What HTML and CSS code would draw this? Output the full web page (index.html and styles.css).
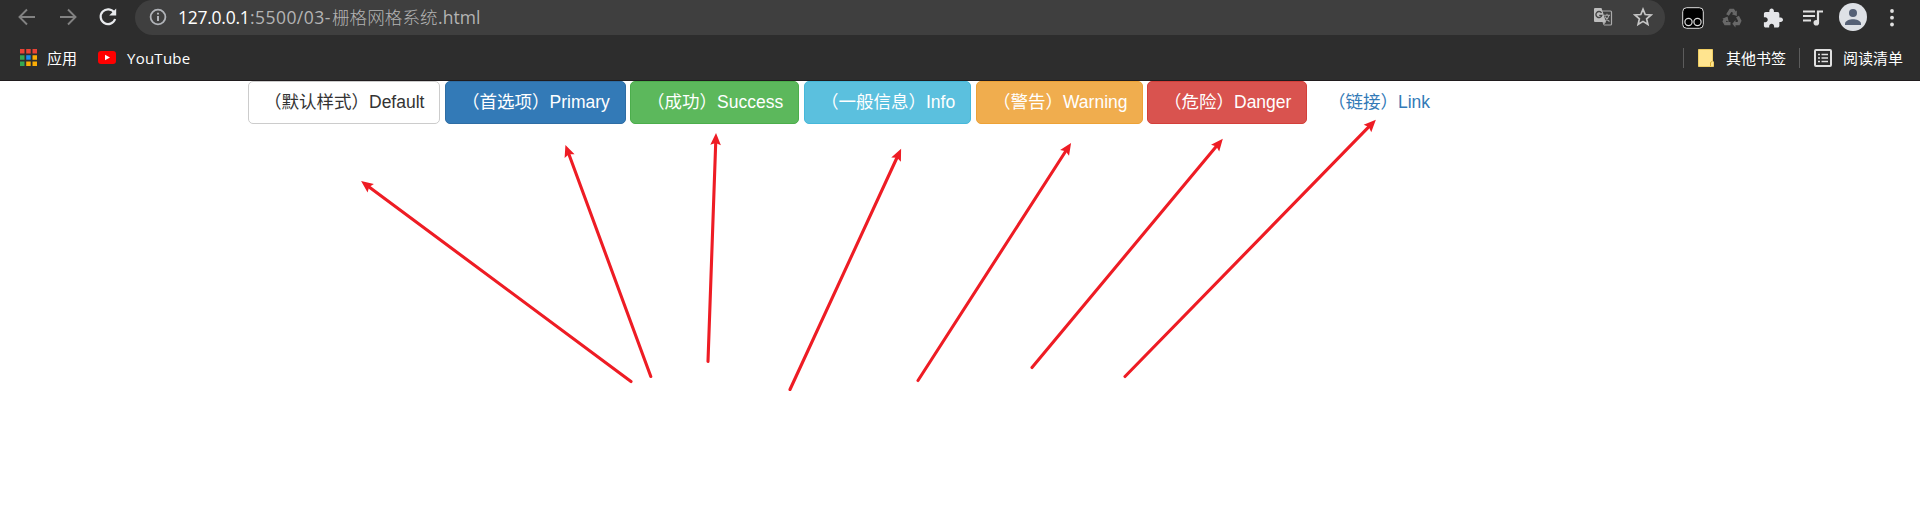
FILE: index.html
```html
<!DOCTYPE html>
<html lang="zh">
<head>
<meta charset="utf-8">
<title>栅格网格系统</title>
<link rel="stylesheet" href="styles.css">
</head>
<body>
<header class="chrome">
  <div class="toolbar">
    <svg class="nav back" width="18" height="18" viewBox="0 0 18 18"><path d="M17 9H2M9 1.5L1.5 9L9 16.500"/></svg>
    <svg class="nav forward" width="18" height="18" viewBox="0 0 18 18"><path d="M1 9H16M9 1.500L16.500 9L9 16.500"/></svg>
    <svg class="reload" width="20" height="20" viewBox="0 0 20 20"><path d="M16.300 5.700A7.400 7.400 0 1 0 17.100 12" fill="none" stroke="#e8eaed" stroke-width="2.200"/><path d="M18.200 1.500V8.500H11.200z" fill="#e8eaed"/></svg>
    <div class="address">
      <svg class="info" width="18" height="18" viewBox="0 0 18 18"><circle cx="9" cy="9" r="7.400" fill="none" stroke="#b0b3b8" stroke-width="1.800"/><path d="M9 8V13M9 4.700V6.600" stroke="#b0b3b8" stroke-width="2"/></svg>
      <div class="url"><span class="host">127.0.0.1</span><span class="port">:5500/03-</span><span class="cn">栅格网格系统</span><span class="ext">.html</span></div>
      <svg class="translate" width="20" height="20" viewBox="0 0 20 20"><path d="M8 4H17.500Q18.500 4 18.500 5V17Q18.500 18 17.500 18H11" fill="none" stroke="#aaa" stroke-width="1.200"/><path d="M2 1H8.500L13 15H2Q1 15 1 14V2Q1 1 2 1z" fill="#bdbdbd"/><path d="M8.500 6A3 3 0 1 0 8.800 8.400H6.200" fill="none" stroke="#444" stroke-width="1.400"/><path d="M11 8.300H17M14 6.800V8.300M16 8.300Q15 12 12 14M12 9.500Q13.500 12.500 16.500 14.500" fill="none" stroke="#aaa" stroke-width="1.100"/><path d="M9.500 15H13L10.500 18.300z" fill="#aaa"/></svg>
      <svg class="star" width="20" height="20" viewBox="0 0 20 20"><path d="M10 2.200L12.200 7.500L18 8L13.600 11.800L14.900 17.400L10 14.400L5.100 17.400L6.400 11.800L2 8L7.800 7.500z" fill="none" stroke="#c6c6c6" stroke-width="1.700"/></svg>
    </div>
    <svg class="monkey" width="22" height="22" viewBox="0 0 22 22"><rect x=".7" y=".7" width="20.600" height="20.600" rx="4" fill="#000" stroke="#ddd"/><circle cx="6.500" cy="15" r="3.600" fill="none" stroke="#ddd" stroke-width="1.200"/><circle cx="15.500" cy="15" r="3.600" fill="none" stroke="#ddd" stroke-width="1.200"/></svg>
    <svg class="recycle" width="20" height="20" viewBox="0 0 20 20"><g fill="none" stroke="#686868" stroke-width="3.200"><path d="M5.500 7L8.500 2.300H11L12.500 4.500"/><path d="M15.500 8.500L17.800 12.800L16.500 15.700H13"/><path d="M8.500 15.700H3.500L2.200 13.500L3.400 11"/></g><g fill="#686868"><path d="M14.800 2.500V8L9.800 6.200z"/><path d="M13.500 12V19.400L10.300 15.700z"/><path d="M.3 10.800L5.500 8.500L6.800 14z"/></g></svg>
    <svg class="puzzle" width="20" height="20" viewBox="1 0.500 22 22"><path fill="#e4e5e8" d="M20.500 11H19V7c0-1.100-.9-2-2-2h-4V3.500C13 2.120 11.880 1 10.500 1S8 2.120 8 3.500V5H4c-1.100 0-1.990.9-1.990 2v3.800H3.500c1.490 0 2.700 1.210 2.700 2.700s-1.210 2.700-2.700 2.700H2V20c0 1.100.9 2 2 2h3.800v-1.500c0-1.490 1.210-2.700 2.700-2.700s2.700 1.210 2.700 2.700V22H17c1.100 0 2-.9 2-2v-4h1.500c1.380 0 2.500-1.120 2.500-2.500S21.880 11 20.500 11z"/></svg>
    <svg class="queue" width="20" height="18" viewBox="0 0 20 18"><path d="M0 2.500H12M0 7H12M0 11.500H8" stroke="#e0e0e0" stroke-width="2"/><path d="M15 13.500V2.500H20" fill="none" stroke="#e0e0e0" stroke-width="2.200"/><circle cx="13.300" cy="13.800" r="2.800" fill="#e0e0e0"/></svg>
    <svg class="avatar" width="28" height="28" viewBox="0 0 28 28"><circle cx="14" cy="14" r="14" fill="#dee1e6"/><circle cx="14" cy="10" r="4" fill="#566176"/><path d="M6 22V20.500C6 17.700 11 16.200 14 16.200S22 17.700 22 20.500V22z" fill="#566176"/></svg>
    <svg class="dots" width="4" height="18" viewBox="0 0 4 18"><g fill="#e0e0e0"><circle cx="2" cy="2" r="1.900"/><circle cx="2" cy="8.700" r="1.900"/><circle cx="2" cy="15.500" r="1.900"/></g></svg>
  </div>
  <div class="bookmarks">
    <svg class="apps" width="17" height="17" viewBox="0 0 17 17"><g fill="#ea4335"><path d="M0 0h4.500v4.500H0zM6.200 0h4.500v4.500H6.200zM12.500 0H17v4.500h-4.500z"/></g><path fill="#34a853" d="M0 6.200h4.500v4.500H0zM0 12.500h4.500V17H0z"/><path fill="#1a8cf0" d="M6.200 6.200h4.500v4.500H6.200z"/><path fill="#fbad05" d="M12.500 6.200H17v4.500h-4.500zM6.200 12.500h4.500V17H6.200zM12.500 12.500H17V17h-4.500z"/></svg>
    <span class="label apps-label">应用</span>
    <svg class="youtube" width="18" height="13" viewBox="0 0 18 13"><rect width="18" height="13" rx="3" fill="#f00"/><path d="M7 3.700L12 6.500L7 9.300z" fill="#fff"/></svg>
    <span class="label yt-label">YouTube</span>
    <span class="divider"></span>
    <svg class="folder" width="16" height="18" viewBox="0 0 16 18"><path d="M.5 .5H14.500V12L15.500 13V17.500H.5z" fill="#ffe48f" stroke="#efcd62"/><path d="M12.500 17V13.500L14 12.500" fill="none" stroke="#d9ad2d"/></svg>
    <span class="label folder-label">其他书签</span>
    <span class="divider second"></span>
    <svg class="list" width="18" height="18" viewBox="0 0 18 18"><rect x="1" y="1" width="16" height="16" rx="1" fill="none" stroke="#e0e0e0" stroke-width="2"/><path d="M4 5.500h2M7.500 5.500H14M4 9h2M7.500 9H14M4 12.500h2M7.500 12.500H14" stroke="#e0e0e0" stroke-width="1.700"/></svg>
    <span class="label">阅读清单</span>
  </div>
</header>
<main class="page">
  <div class="buttons">
    <button class="btn btn-default">（默认样式）Default</button>
    <button class="btn btn-primary">（首选项）Primary</button>
    <button class="btn btn-success">（成功）Success</button>
    <button class="btn btn-info">（一般信息）Info</button>
    <button class="btn btn-warning">（警告）Warning</button>
    <button class="btn btn-danger">（危险）Danger</button>
    <button class="btn btn-link">（链接）Link</button>
  </div>
</main>
<svg class="arrows" width="1920" height="505" viewBox="0 0 1920 505">
  <defs><marker id="head" markerUnits="userSpaceOnUse" markerWidth="14" markerHeight="12" refX="12" refY="6" orient="auto"><path d="M12.500 6L0.500 0.700L2.500 6L0.500 11.300z" fill="#ee1c24"/></marker></defs>
  <g class="shafts">
    <path d="M631 381.500L369.100 187"/>
    <path d="M650.800 376.500L569 154.500"/>
    <path d="M708 361.500L715.700 143"/>
    <path d="M790 389.500L896.800 158"/>
    <path d="M918 380.500L1065.500 151.500"/>
    <path d="M1032 367.500L1216 146.800"/>
    <path d="M1125 376.500L1368.500 127.200"/>
  </g>
  <g class="heads">
    <path d="M631 381.500L361.500 181.300"/>
    <path d="M650.800 376.500L565.600 145.400"/>
    <path d="M708 361.500L716 133.500"/>
    <path d="M790 389.500L900.900 149.200"/>
    <path d="M918 380.500L1070.800 143.300"/>
    <path d="M1032 367.500L1222.500 139.200"/>
    <path d="M1125 376.500L1375.500 120.200"/>
  </g>
</svg>
</body>
</html>
```
FILE: styles.css
```css
* { box-sizing: border-box; }
body { margin: 0; width: 1920px; height: 505px; overflow: hidden; background: #fff; }
svg { display: block; flex: none; }
.chrome { height: 81px; background: #2d2d2d; border-bottom: 1px solid #201c1e; }
.toolbar { height: 35px; display: flex; align-items: center; }
.nav { fill: none; stroke: #828282; stroke-width: 1.9; margin-bottom: 2px; }
.back { margin-left: 18px; }
.forward { margin-left: 23px; }
.reload { margin: 0 0 2px 21px; }
.address { width: 1530px; height: 35px; margin-left: 17px; padding-bottom: 1px; border-radius: 18px; background: #3f3f3f; display: flex; align-items: center; flex: none; }
.info { margin-left: 14px; }
.url { display: flex; margin-left: 11px; width: 310px; font: 17.5px/24px "Open Sans", "Noto Sans CJK SC", sans-serif; color: #b4b4b4; white-space: nowrap; }
.host { color: #fff; width: 72px; letter-spacing: -.25px; }
.port { width: 82px; letter-spacing: .45px; }
.cn { width: 106px; font-weight: 300; letter-spacing: .1px; }
.ext { letter-spacing: .05px; }
.translate { margin-left: auto; }
.star { margin: 0 12px 0 20px; }
.monkey { margin-left: 17px; }
.recycle { margin-left: 18px; }
.puzzle { margin-left: 21px; }
.queue { margin-left: 20px; }
.avatar { margin: 0 0 1px 16px; }
.dots { margin-left: 23px; }
.bookmarks { height: 45px; display: flex; align-items: center; }
.label { font: 15px/20px "Open Sans", "Noto Sans CJK SC", sans-serif; color: #fff; white-space: nowrap; }
.apps { margin-left: 20px; }
.apps-label { margin-left: 10px; }
.youtube { margin-left: 21px; }
.yt-label { margin-left: 11px; width: 64px; letter-spacing: .25px; }
.divider { width: 1px; height: 20px; background: #5c5c5c; margin-left: auto; }
.bookmarks .second { margin-left: 13px; }
.folder { margin-left: 14px; }
.folder-label { margin-left: 12px; }
.list { margin: 0 11px 0 14px; }
.bookmarks .label:last-child { margin-right: 17px; }
.page { padding-left: 248px; }
.buttons { display: flex; height: 43px; }
.btn { height: 43px; margin: 0 4px 0 0; padding: 0 0 1px 16px; border: 1px solid transparent; border-radius: 5px; font: 17.5px/25px "Liberation Sans", "Noto Sans CJK SC", sans-serif; text-align: left; white-space: nowrap; color: #fff; }
.btn-default { width: 192px; margin-right: 5px; padding-left: 15px; color: #333; background: #fff; border-color: #ccc; }
.btn-primary { width: 181px; background: #337ab7; border-color: #2e6da4; }
.btn-success { width: 169px; margin-right: 5px; background: #5cb85c; border-color: #4cae4c; }
.btn-info { width: 167px; margin-right: 5px; background: #5bc0de; border-color: #46b8da; }
.btn-warning { width: 167px; background: #f0ad4e; border-color: #eea236; }
.btn-danger { width: 160px; background: #d9534f; border-color: #d43f3a; }
.btn-link { color: #337ab7; background: none; }
.arrows { position: absolute; left: 0; top: 0; pointer-events: none; }
.shafts path { fill: none; stroke: #ee1c24; stroke-width: 3.1; stroke-linecap: round; }
.heads path { fill: none; stroke: none; marker-end: url(#head); }
```
